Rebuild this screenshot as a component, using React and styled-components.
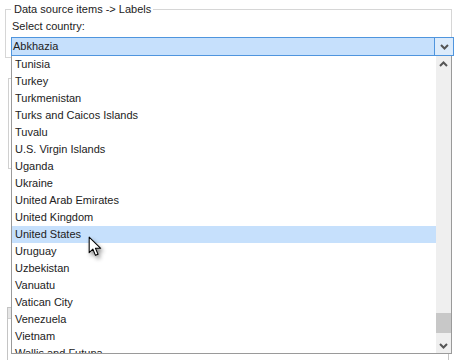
import React from "react";
import styled, { createGlobalStyle } from "styled-components";

const GlobalStyle = createGlobalStyle`
  html, body {
    margin: 0;
    padding: 0;
    background: #fff;
  }
  body {
    font-family: "Liberation Sans", Arial, sans-serif;
    font-size: 11px;
    color: #222;
  }
`;

const countries = [
  "Tunisia",
  "Turkey",
  "Turkmenistan",
  "Turks and Caicos Islands",
  "Tuvalu",
  "U.S. Virgin Islands",
  "Uganda",
  "Ukraine",
  "United Arab Emirates",
  "United Kingdom",
  "United States",
  "Uruguay",
  "Uzbekistan",
  "Vanuatu",
  "Vatican City",
  "Venezuela",
  "Vietnam",
  "Wallis and Futuna",
];

const Page = styled.div`
  position: relative;
  width: 460px;
  height: 360px;
  overflow: hidden;
  padding-top: 2px;
  box-sizing: border-box;
`;

const Fieldset = styled.fieldset`
  margin: 0 0 0 5px;
  width: 447px;
  box-sizing: border-box;
  border: 1px solid #d6d6d6;
  padding: 0 0 1px 5px;
  min-width: 0;
`;

const Legend = styled.legend`
  margin-left: 0;
  padding: 0 2px 0 3px;
  line-height: 14px;
  font-size: 11px;
  color: #222;
`;

const Label = styled.div`
  line-height: 14px;
  padding: 3px 0 0 1px;
  margin-bottom: 4px;
`;

const Select = styled.div`
  display: flex;
  width: 443px;
  height: 19px;
  box-sizing: border-box;
  border: 1px solid #4f95de;
  background: #c6e0fc;
`;

const SelectValue = styled.div`
  flex: 1;
  padding-left: 1px;
  line-height: 17px;
`;

const ArrowButton = styled.div`
  width: 18px;
  display: flex;
  align-items: center;
  justify-content: center;
  border-left: 1px solid #4f95de;
  background: #dcebfb;
`;

const Box = styled.div`
  margin: 20px 0 0 8px;
  height: 89px;
  width: 440px;
  border: 1px solid #d0d0d0;
`;

const Panel = styled.div`
  margin: 138px 0 0 7px;
  width: 440px;
  height: 60px;
  border: 1px solid #c4c4c4;
`;

const PanelHeader = styled.div`
  height: 10px;
  background: #e6e6e6;
  border-bottom: 1px solid #d0d0d0;
`;

const Dropdown = styled.div`
  position: absolute;
  left: 11px;
  top: 56px;
  width: 441px;
  height: 298px;
  box-sizing: border-box;
  display: flex;
  background: #fff;
  border: 1px solid #9a9a9a;
  border-top: none;
`;

const Items = styled.div`
  flex: 1;
  overflow: hidden;
`;

const Item = styled.div`
  height: 17px;
  line-height: 17px;
  padding-left: 3px;
  white-space: nowrap;
  color: #222;
  background: ${(p) => (p.$active ? "#c6e0fc" : "transparent")};
`;

const Scrollbar = styled.div`
  width: 15px;
  display: flex;
  flex-direction: column;
  background: #efefef;
`;

const ScrollArrow = styled.div`
  height: 15px;
  display: flex;
  align-items: center;
  justify-content: center;
`;

const Thumb = styled.div`
  height: 20px;
  background: #c8c8c8;
  margin-top: auto;
  margin-bottom: 5px;
`;

const Cursor = styled.svg`
  position: absolute;
  left: 88px;
  top: 236px;
  filter: drop-shadow(2px 3px 2px rgba(0, 0, 0, 0.45));
`;

const Chevron = ({ up }) => (
  <svg width="9" height="6" viewBox="0 0 9 6">
    <polyline
      points={up ? "1,5 4.5,1.5 8,5" : "1,1 4.5,4.5 8,1"}
      fill="none"
      stroke="#555"
      strokeWidth="2"
    />
  </svg>
);

export default function App() {
  return (
    <Page>
      <GlobalStyle />
      <Fieldset>
        <Legend>Data source items -&gt; Labels</Legend>
        <Label>Select country:</Label>
        <Select>
          <SelectValue>Abkhazia</SelectValue>
          <ArrowButton>
            <Chevron />
          </ArrowButton>
        </Select>
      </Fieldset>
      <Box />
      <Panel>
        <PanelHeader />
      </Panel>

      <Dropdown>
        <Items>
          {countries.map((c) => (
            <Item key={c} $active={c === "United States"}>
              {c}
            </Item>
          ))}
        </Items>
        <Scrollbar>
          <ScrollArrow>
            <Chevron up />
          </ScrollArrow>
          <Thumb />
          <ScrollArrow>
            <Chevron />
          </ScrollArrow>
        </Scrollbar>
      </Dropdown>

      <Cursor width="17" height="23" viewBox="0 0 16 22">
        <path
          d="M1 1 L1 16 L4.5 12.5 L7 18.5 L9.5 17.5 L7 11.8 L12 11.8 Z"
          fill="#fff"
          stroke="#000"
          strokeWidth="1"
          strokeLinejoin="round"
        />
      </Cursor>
    </Page>
  );
}
